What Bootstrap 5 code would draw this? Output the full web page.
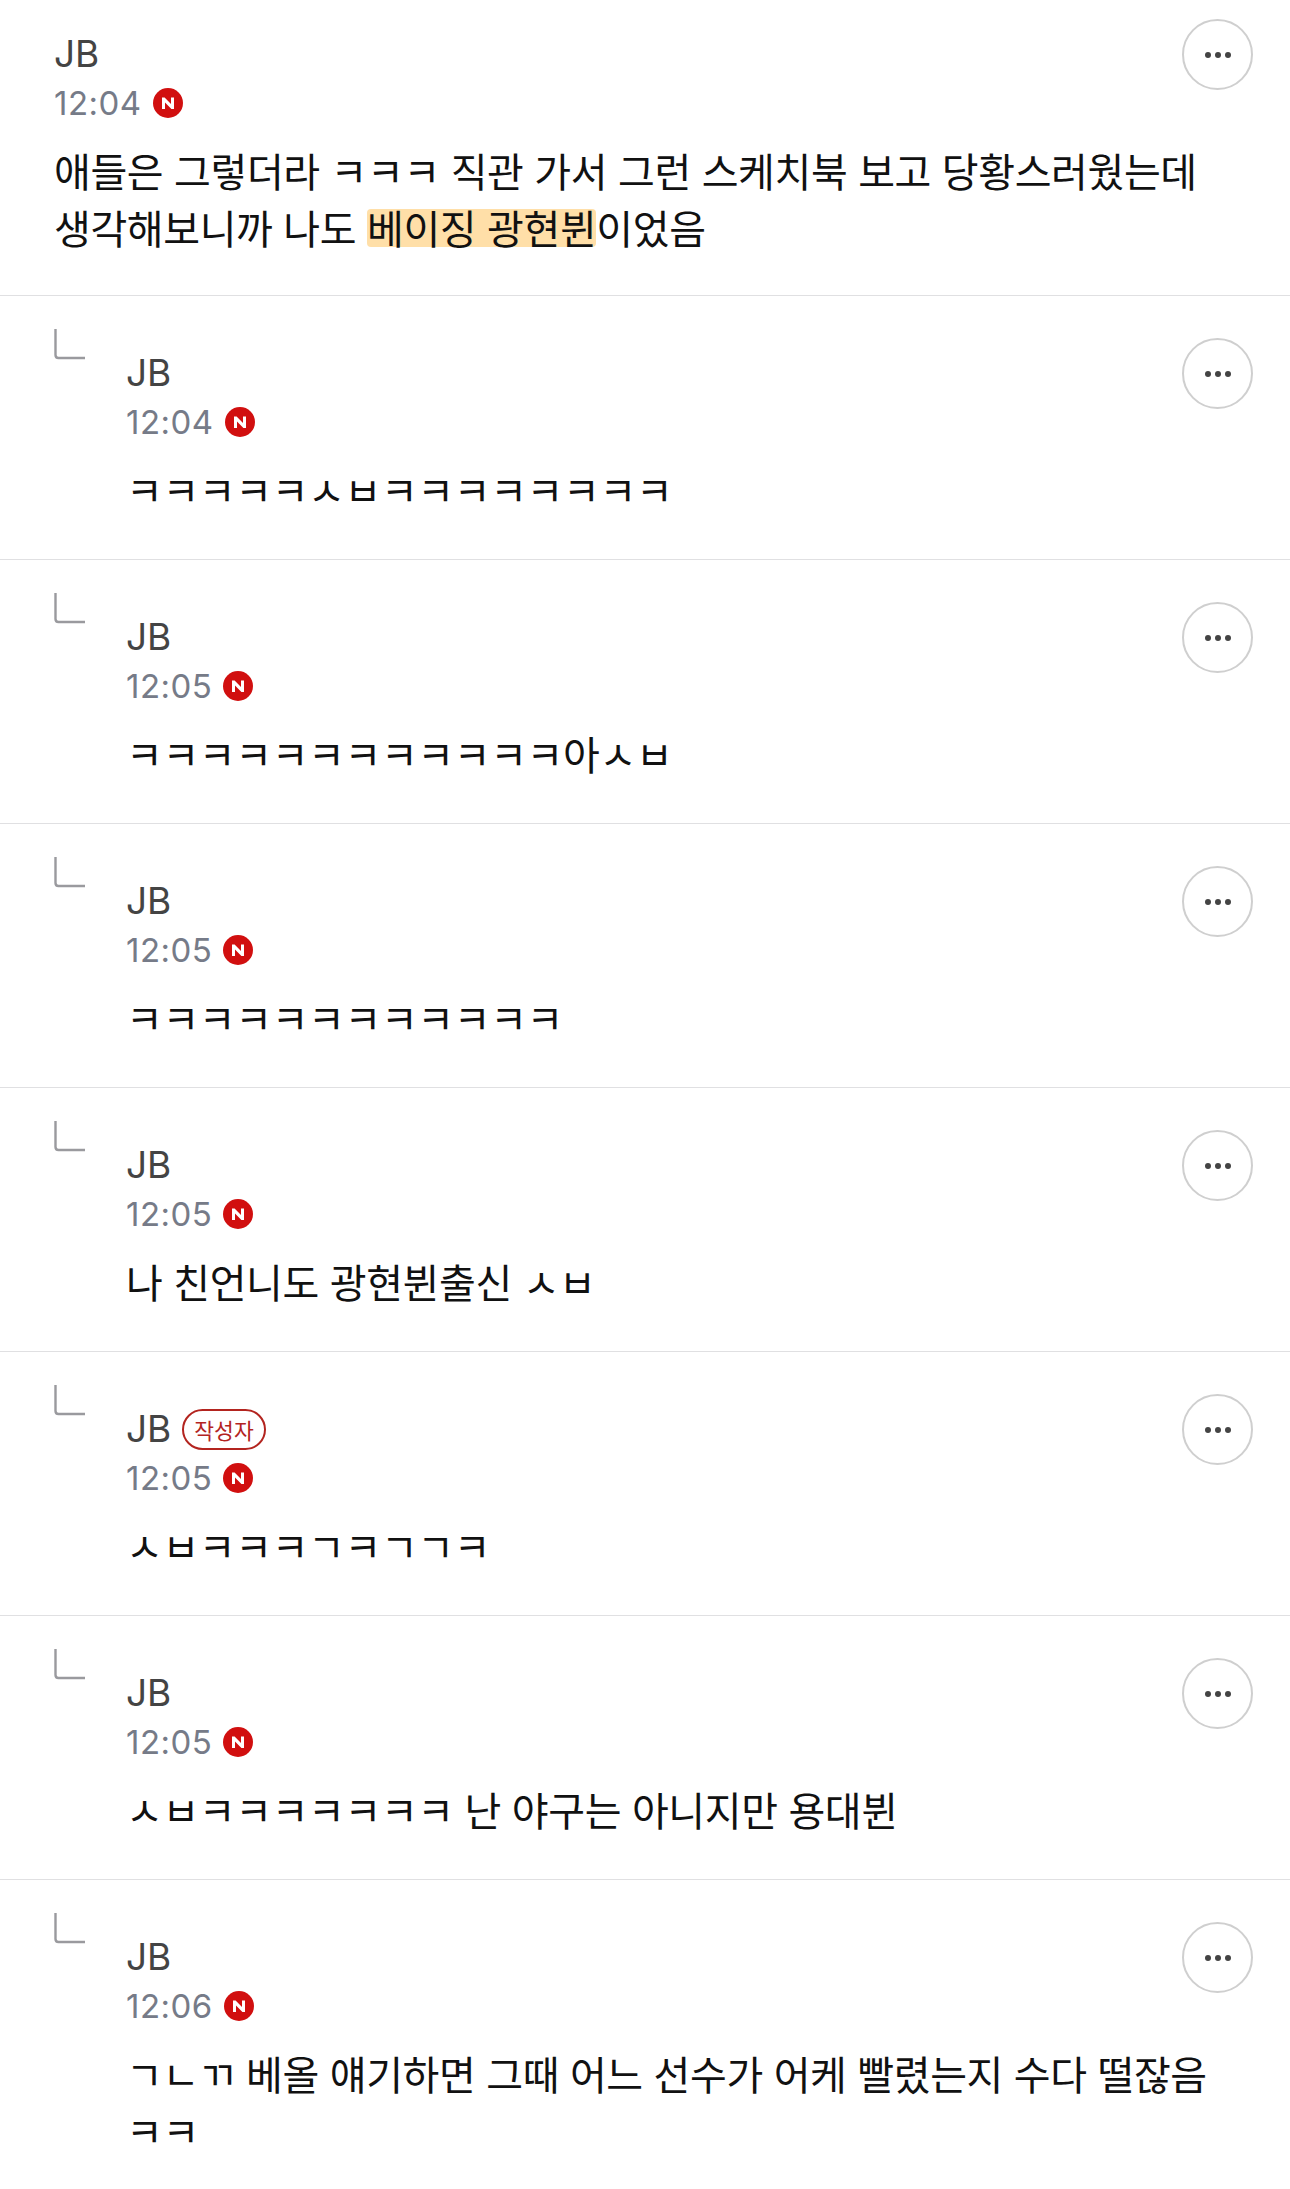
<!DOCTYPE html>
<html lang="ko">
<head>
    <meta charset="UTF-8">
    <title>Comments</title>
    <link href="https://cdn.jsdelivr.net/npm/bootstrap@5.3.0/dist/css/bootstrap.min.css" rel="stylesheet">
    <style>
        body {
            background: #fff;
            font-family: "Noto Sans CJK KR", "Noto Sans", sans-serif;
            overflow: hidden;
        }
        .cmt-row {
            height: 264px;
            border-bottom: 1px solid #e0e0e2;
            padding: 32px 37px 0 54px;
        }
        .cmt-first {
            height: 296px;
            padding-top: 31px;
        }
        .cmt-last {
            border-bottom: 0;
        }
        .cmt-reply-mark {
            width: 72px;
            flex: none;
        }
        .cmt-reply-mark svg {
            display: block;
        }
        .cmt-body {
            margin-top: 22px;
            min-width: 0;
        }
        .cmt-first .cmt-body {
            margin-top: 0;
        }
        .cmt-name {
            font-family: "Inter", "Noto Sans CJK KR", sans-serif;
            font-size: 37px;
            line-height: 46px;
            color: #444;
        }
        .cmt-writer {
            font-family: "Noto Sans CJK KR", sans-serif;
            font-size: 21.5px;
            line-height: 37px;
            height: 41px;
            padding: 0 10px;
            margin-left: 11px;
            border: 2px solid #b3241f;
            border-radius: 21px;
            color: #b3241f;
        }
        .cmt-time {
            font-family: "Inter", sans-serif;
            font-size: 33px;
            line-height: 44px;
            letter-spacing: .5px;
            color: #767b88;
            margin-top: 4px;
        }
        .cmt-n {
            width: 30px;
            height: 30px;
            margin-left: 11px;
        }
        .cmt-text {
            font-size: 40px;
            line-height: 57px;
            color: #111;
            margin-top: 17px;
            letter-spacing: -.38px;
            white-space: nowrap;
        }
        .cmt-hl {
            position: relative;
            z-index: 0;
        }
        .cmt-hl::before {
            content: "";
            position: absolute;
            left: 0;
            right: 0;
            top: 11px;
            bottom: 9px;
            z-index: -1;
            border-radius: 4px;
            background: #ffdfa8;
        }
        .cmt-more {
            width: 71px;
            height: 71px;
            flex: none;
            padding: 0;
            background: #fff;
            border: 2px solid #cfcfcf;
            border-radius: 50%;
            margin-top: 10px;
        }
        .cmt-first .cmt-more {
            margin-top: -12px;
        }
    </style>
</head>
<body>
    <div id="list"></div>
    <script src="https://cdn.jsdelivr.net/npm/bootstrap@5.3.0/dist/js/bootstrap.bundle.min.js"></script>
    <script>
        const comments = [
            { time: '12:04', text: '애들은 그렇더라 ㅋㅋㅋ 직관 가서 그런 스케치북 보고 당황스러웠는데<br>생각해보니까 나도 <span class="cmt-hl">베이징 광현뷘</span>이었음', first: true },
            { time: '12:04', text: 'ㅋㅋㅋㅋㅋㅅㅂㅋㅋㅋㅋㅋㅋㅋㅋ' },
            { time: '12:05', text: 'ㅋㅋㅋㅋㅋㅋㅋㅋㅋㅋㅋㅋ아ㅅㅂ' },
            { time: '12:05', text: 'ㅋㅋㅋㅋㅋㅋㅋㅋㅋㅋㅋㅋ' },
            { time: '12:05', text: '나 친언니도 광현뷘출신 ㅅㅂ' },
            { time: '12:05', text: 'ㅅㅂㅋㅋㅋㄱㅋㄱㄱㅋ', writer: true },
            { time: '12:05', text: 'ㅅㅂㅋㅋㅋㅋㅋㅋㅋ 난 야구는 아니지만 용대뷘' },
            { time: '12:06', text: 'ㄱㄴㄲ 베올 얘기하면 그때 어느 선수가 어케 빨렸는지 수다 떨잖음<br>ㅋㅋ', last: true }
        ];
        const nIcon = '<svg class="cmt-n" viewBox="0 0 30 30"><circle cx="15" cy="15" r="15" fill="#d10f0f"/><path d="M9 21V9.5h2.6l6.4 6.6V9.5h3V21h-2.6L12 14.4V21z" fill="#fff"/></svg>';
        const replyMark = '<div class="cmt-reply-mark"><svg width="32" height="32" viewBox="0 0 32 32"><path d="M1.5 1v26q0 3 3 3H31" fill="none" stroke="#9a9a9e" stroke-width="2.4"/></svg></div>';
        const moreBtn = '<button class="cmt-more d-flex align-items-center justify-content-center"><svg width="28" height="8" viewBox="0 0 28 8"><circle cx="4" cy="4" r="3" fill="#444"/><circle cx="14" cy="4" r="3" fill="#444"/><circle cx="24" cy="4" r="3" fill="#444"/></svg></button>';
        document.getElementById('list').innerHTML = comments.map(c => `
            <div class="cmt-row d-flex ${c.first ? 'cmt-first' : ''} ${c.last ? 'cmt-last' : ''}">
                ${c.first ? '' : replyMark}
                <div class="cmt-body flex-grow-1">
                    <div class="cmt-name d-flex align-items-center">JB${c.writer ? '<span class="cmt-writer">작성자</span>' : ''}</div>
                    <div class="cmt-time d-flex align-items-center">${c.time}${nIcon}</div>
                    <div class="cmt-text">${c.text}</div>
                </div>
                ${moreBtn}
            </div>`).join('');
    </script>
</body>
</html>
